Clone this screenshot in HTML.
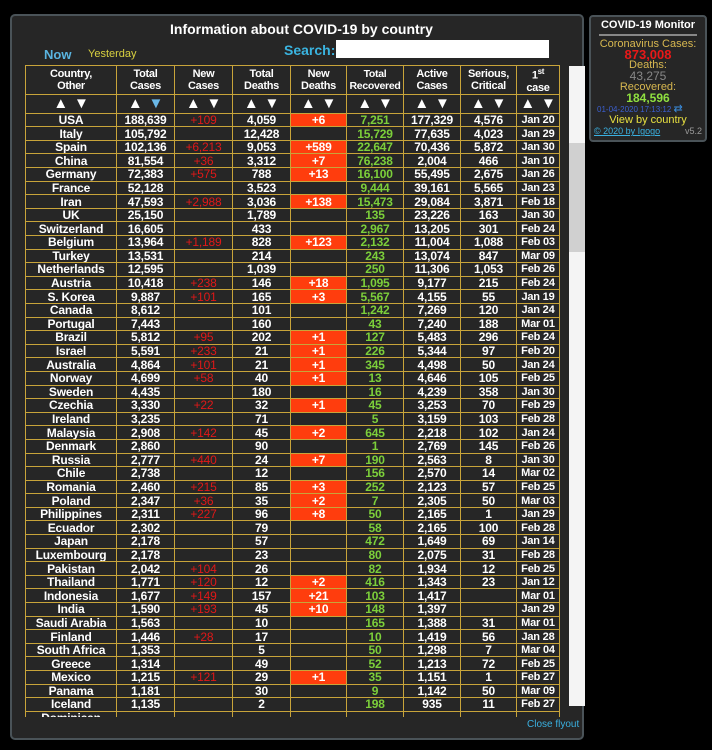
<!DOCTYPE html><html><head><meta charset="utf-8"><style>
body{margin:0;width:712px;height:750px;background:#000;position:relative;overflow:hidden;font-family:"Liberation Sans",sans-serif}
.main{position:absolute;left:10px;top:14px;width:574px;height:726px;background:#262626;border:2px solid #4a5358;border-radius:5px;box-sizing:border-box}
.title{position:absolute;left:170px;top:21px;color:#fff;font-weight:bold;font-size:14px}
.now{position:absolute;left:44px;top:47px;color:#5ab4e0;font-weight:bold;font-size:13px}
.yes{position:absolute;left:88px;top:48px;color:#d8d040;font-size:11px}
.srch{position:absolute;left:284px;top:42px;color:#3ab4e0;font-weight:bold;font-size:14px}
.sbox{position:absolute;left:336px;top:40px;width:213px;height:18px;background:#fff}
.tw{position:absolute;left:25px;top:65px;width:535px;height:652px;overflow:hidden}
table{border-collapse:collapse;table-layout:fixed;width:534px;color:#fff;font-weight:bold;font-size:12px;letter-spacing:-0.2px}
td{border:1px solid #c8a43a;text-align:center;padding:0;height:12.6px;line-height:12px;white-space:nowrap;overflow:hidden}
tr.h td{height:26px;line-height:12px;font-size:11px;letter-spacing:-0.3px}
tr.a td{height:18px;font-size:15px;line-height:14px;word-spacing:2px}
.r{color:#e01818;font-weight:normal}.g{color:#7ccf3a}.o{background:#ff3d0d}
.sb{position:absolute;left:569px;top:66px;width:16px;height:640px;background:#f4f4f4}
.th{position:absolute;left:569px;top:143px;width:16px;height:109px;background:#d0d0d0}
.cf{position:absolute;left:527px;top:719px;color:#3ab0e0;font-size:10px}
.mon{position:absolute;left:589px;top:15px;width:118px;height:127px;background:#262626;border:2px solid #4a5358;border-radius:4px;box-sizing:border-box;text-align:center;font-size:11px;line-height:10.8px}
</style></head><body>
<div class="main"></div>
<div class="title">Information about COVID-19 by country</div>
<div class="now">Now</div><div class="yes">Yesterday</div>
<div class="srch">Search:</div><div class="sbox"></div>
<div class="tw"><table>
<colgroup><col style="width:91px"><col style="width:58px"><col style="width:58px"><col style="width:58px"><col style="width:56px"><col style="width:57px"><col style="width:57px"><col style="width:56px"><col style="width:43px"></colgroup>
<tr class="h"><td>Country,<br>Other</td><td>Total<br>Cases</td><td>New<br>Cases</td><td>Total<br>Deaths</td><td>New<br>Deaths</td><td style="font-size:10.5px">Total<br>Recovered</td><td>Active<br>Cases</td><td>Serious,<br>Critical</td><td>1<sup style="font-size:8px">st</sup><br>case</td></tr>
<tr class="a"><td>▲ ▼</td><td>▲ <span style="color:#6ab8e8">▼</span></td><td>▲ ▼</td><td>▲ ▼</td><td>▲ ▼</td><td>▲ ▼</td><td>▲ ▼</td><td>▲ ▼</td><td>▲ ▼</td></tr>
<tbody id="b"></tbody></table></div>
<div class="sb"></div><div class="th"></div>
<div class="cf">Close flyout</div>
<div class="mon">
<div style="color:#fff;font-weight:bold;margin-top:3px;padding-bottom:3px;border-bottom:2px solid #888;margin-left:8px;margin-right:8px">COVID-19 Monitor</div>
<div style="color:#d8b850;margin-top:3px">Coronavirus Cases:</div>
<div style="color:#e81818;font-weight:bold;font-size:13px">873,008</div>
<div style="color:#d8b850">Deaths:</div>
<div style="color:#888;font-size:12px">43,275</div>
<div style="color:#d8b850">Recovered:</div>
<div style="color:#8fe040;font-weight:bold;font-size:12px">184,596</div>
<div style="color:#3b5fd0;font-size:8px;text-align:left;padding-left:6px">01-04-2020 17:13:12 <span style="color:#3a8ee0;font-size:11px">⇄</span></div>
<div style="color:#e8e040">View by country</div>
<div style="text-align:left;padding-left:3px;font-size:9px"><span style="color:#3ab0e0;text-decoration:underline">© 2020 by Igogo</span><span style="color:#999;float:right;margin-right:3px">v5.2</span></div>
</div>
<script>
var d=`USA|188,639|+109|4,059|+6|7,251|177,329|4,576|Jan 20
Italy|105,792||12,428||15,729|77,635|4,023|Jan 29
Spain|102,136|+6,213|9,053|+589|22,647|70,436|5,872|Jan 30
China|81,554|+36|3,312|+7|76,238|2,004|466|Jan 10
Germany|72,383|+575|788|+13|16,100|55,495|2,675|Jan 26
France|52,128||3,523||9,444|39,161|5,565|Jan 23
Iran|47,593|+2,988|3,036|+138|15,473|29,084|3,871|Feb 18
UK|25,150||1,789||135|23,226|163|Jan 30
Switzerland|16,605||433||2,967|13,205|301|Feb 24
Belgium|13,964|+1,189|828|+123|2,132|11,004|1,088|Feb 03
Turkey|13,531||214||243|13,074|847|Mar 09
Netherlands|12,595||1,039||250|11,306|1,053|Feb 26
Austria|10,418|+238|146|+18|1,095|9,177|215|Feb 24
S. Korea|9,887|+101|165|+3|5,567|4,155|55|Jan 19
Canada|8,612||101||1,242|7,269|120|Jan 24
Portugal|7,443||160||43|7,240|188|Mar 01
Brazil|5,812|+95|202|+1|127|5,483|296|Feb 24
Israel|5,591|+233|21|+1|226|5,344|97|Feb 20
Australia|4,864|+101|21|+1|345|4,498|50|Jan 24
Norway|4,699|+58|40|+1|13|4,646|105|Feb 25
Sweden|4,435||180||16|4,239|358|Jan 30
Czechia|3,330|+22|32|+1|45|3,253|70|Feb 29
Ireland|3,235||71||5|3,159|103|Feb 28
Malaysia|2,908|+142|45|+2|645|2,218|102|Jan 24
Denmark|2,860||90||1|2,769|145|Feb 26
Russia|2,777|+440|24|+7|190|2,563|8|Jan 30
Chile|2,738||12||156|2,570|14|Mar 02
Romania|2,460|+215|85|+3|252|2,123|57|Feb 25
Poland|2,347|+36|35|+2|7|2,305|50|Mar 03
Philippines|2,311|+227|96|+8|50|2,165|1|Jan 29
Ecuador|2,302||79||58|2,165|100|Feb 28
Japan|2,178||57||472|1,649|69|Jan 14
Luxembourg|2,178||23||80|2,075|31|Feb 28
Pakistan|2,042|+104|26||82|1,934|12|Feb 25
Thailand|1,771|+120|12|+2|416|1,343|23|Jan 12
Indonesia|1,677|+149|157|+21|103|1,417||Mar 01
India|1,590|+193|45|+10|148|1,397||Jan 29
Saudi Arabia|1,563||10||165|1,388|31|Mar 01
Finland|1,446|+28|17||10|1,419|56|Jan 28
South Africa|1,353||5||50|1,298|7|Mar 04
Greece|1,314||49||52|1,213|72|Feb 25
Mexico|1,215|+121|29|+1|35|1,151|1|Feb 27
Panama|1,181||30||9|1,142|50|Mar 09
Iceland|1,135||2||198|935|11|Feb 27
Dominican|||||||||`;
var h='';d.split('\n').forEach(function(l){var c=l.split('|');h+='<tr><td>'+c[0]+'</td><td>'+c[1]+'</td><td class="r">'+c[2]+'</td><td>'+c[3]+'</td><td'+(c[4]?' class="o"':'')+'>'+c[4]+'</td><td class="g">'+c[5]+'</td><td>'+c[6]+'</td><td>'+c[7]+'</td><td style="font-size:11px">'+c[8]+'</td></tr>';});
document.getElementById('b').innerHTML=h;
</script>
</body></html>
